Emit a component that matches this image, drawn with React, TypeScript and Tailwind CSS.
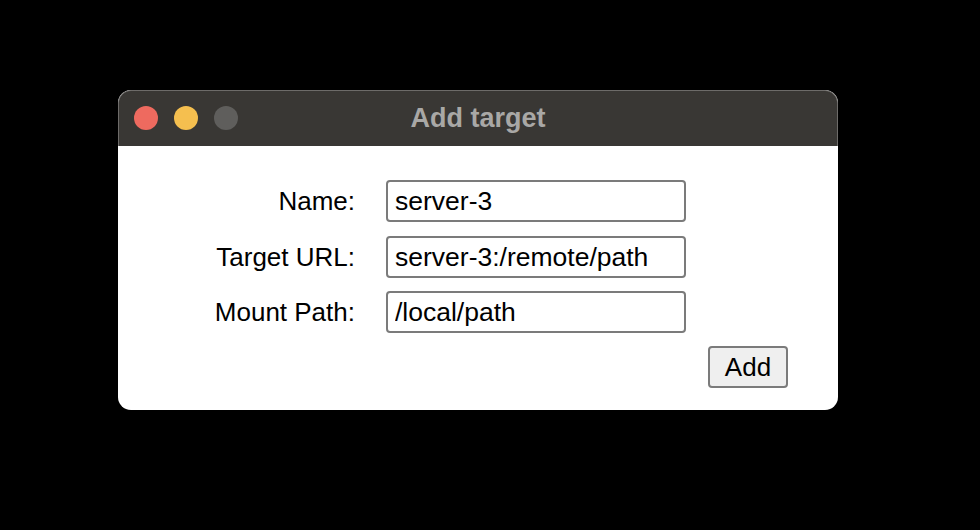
import React, { useState } from "react";

const fields = [
  { label: "Name:", value: "server-3" },
  { label: "Target URL:", value: "server-3:/remote/path" },
  { label: "Mount Path:", value: "/local/path" },
];

export default function App() {
  const [values, setValues] = useState(fields.map((f) => f.value));

  return (
    <div className="w-[980px] h-[530px] bg-black pt-[90px] pl-[118px] font-['Liberation_Sans',Arial,sans-serif]">
      <div className="w-[720px] h-[320px] rounded-[13px] overflow-hidden bg-white flex flex-col">
        {/* Title bar */}
        <div className="relative h-[56px] bg-[#393734] border-t border-x border-[#6d6b69] rounded-t-[13px] flex items-center justify-center shrink-0">
          <div className="absolute left-[15px] top-[15px] flex gap-[16px]">
            <span className="w-[24px] h-[24px] rounded-full bg-[#ee6a5f]" />
            <span className="w-[24px] h-[24px] rounded-full bg-[#f5bf4f]" />
            <span className="w-[24px] h-[24px] rounded-full bg-[#5f5e5c]" />
          </div>
          <span className="text-[#a9a8a6] font-bold text-[27px] leading-none">Add target</span>
        </div>

        {/* Form */}
        <div className="flex flex-col pt-[34px] gap-[14px]">
          {fields.map((f, i) => (
            <div key={f.label} className={`flex items-center ${i === 2 ? "-mt-[1px]" : ""}`}>
              <label className="w-[237px] text-right text-[26px] leading-none text-black">{f.label}</label>
              <input
                value={values[i]}
                onChange={(e) => {
                  const next = [...values];
                  next[i] = e.target.value;
                  setValues(next);
                }}
                className="ml-[31px] w-[300px] h-[42px] border-2 border-[#7b7b7b] rounded-[4px] px-[7px] text-[26.5px] text-black outline-none bg-white"
              />
            </div>
          ))}
          <div className="flex justify-end pr-[50px] -mt-[1px]">
            <button className="w-[80px] h-[42px] bg-[#efefef] border-2 border-[#7b7b7b] rounded-[4px] text-[26px] text-black leading-none">
              Add
            </button>
          </div>
        </div>
      </div>
    </div>
  );
}
